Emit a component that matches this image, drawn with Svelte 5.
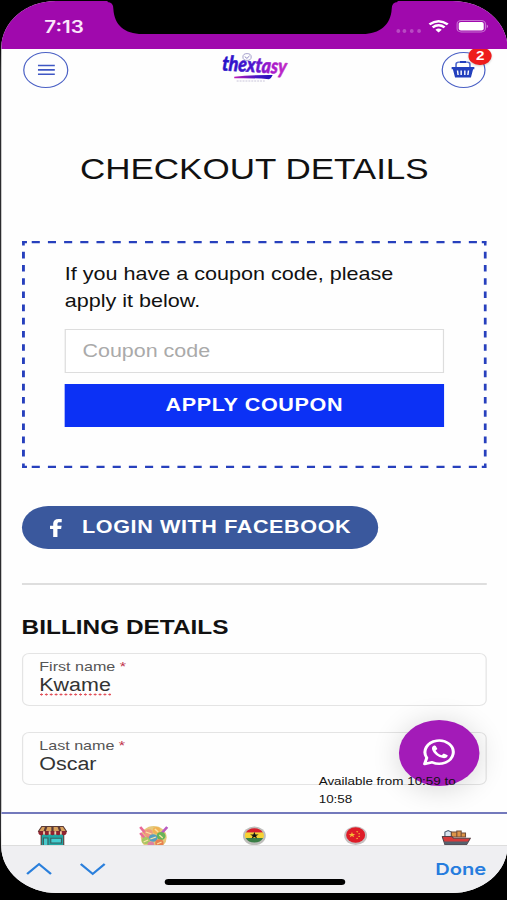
<script lang="ts">
  let coupon = $state("");
  let cartCount = $state(2);

  let fields = $state([
    { id: "first", label: "First name", value: "Kwame", misspelled: true },
    { id: "last", label: "Last name", value: "Oscar", misspelled: false },
  ]);
</script>

<div class="phone">
  <div class="screen">
    <div class="status">
      <span class="time">7:13</span>
      <svg class="notch" width="238" height="35" viewBox="0 0 290 35" preserveAspectRatio="none">
        <path d="M0 0H290V2Q284 2 284 9C283 25 272 34 255 34H35C17 34 7 25 6 9Q6 2 0 2Z" fill="#000" />
      </svg>
      <div class="signals">
        <span class="dots"><i></i><i></i><i></i><i></i></span>
        <svg width="17" height="13" viewBox="0 0 17 13">
          <path d="M1 4.4Q8.5-2 16 4.4" fill="none" stroke="#fff" stroke-width="2.3" />
          <path d="M3.6 7.3Q8.5 3.2 13.4 7.3" fill="none" stroke="#fff" stroke-width="2.3" />
          <path d="M5.9 9.7Q8.5 7.5 11.1 9.7L8.5 12.6Z" fill="#fff" />
        </svg>
        <svg width="27" height="13" viewBox="0 0 27 13">
          <rect x=".6" y=".6" width="23.3" height="11.3" rx="3.4" fill="none" stroke="#c873d4" stroke-width="1" />
          <rect x="2" y="2" width="20.5" height="8.5" rx="1.8" fill="#fff" />
          <path d="M25 4.4Q27 6.2 25 8.2Z" fill="#d58ae0" />
        </svg>
      </div>
    </div>

    <header>
      <button class="round menu" aria-label="Menu">
        <svg width="14" height="12" viewBox="0 0 14 12">
          <path d="M0 1.5H14M0 5.9H14M0 10.3H14" stroke="#3f57c4" stroke-width="1.6" />
        </svg>
      </button>
      <svg class="logo" width="58" height="32" viewBox="-2 0 58 32">
        <defs>
          <linearGradient id="ink" x1="0" x2="1">
            <stop offset="0" stop-color="#2611c8" />
            <stop offset=".45" stop-color="#4a16cf" />
            <stop offset=".75" stop-color="#a719cb" />
            <stop offset="1" stop-color="#c42bc6" />
          </linearGradient>
          <linearGradient id="swash" x1="0" x2="1">
            <stop offset="0" stop-color="#c01bb5" />
            <stop offset=".6" stop-color="#4315c5" />
            <stop offset="1" stop-color="#2311b8" />
          </linearGradient>
        </defs>
        <circle cx="20.5" cy="5" r="3.4" fill="none" stroke="#9b95c6" stroke-width=".8" />
        <path d="M18.6 4.6L20.4 6.4L22.6 3.8" fill="none" stroke="#8179bd" stroke-width=".8" />
        <text x="0" y="20.2" textLength="53" lengthAdjust="spacingAndGlyphs" fill="url(#ink)" stroke="url(#ink)" stroke-width=".5" transform="rotate(4 26 16)">thextasy</text>
        <path d="M10 24.8Q24 22.9 41.5 23.1Q40.5 26.4 38.5 27.2Q24 25.8 10 26.3Z" fill="url(#swash)" />
        <path d="M12 29H35" stroke="#b9b4cf" stroke-width=".7" stroke-dasharray="1.6 .8" />
      </svg>
      <button class="round cart" aria-label="Cart">
        <svg width="19" height="17" viewBox="0 0 19 17">
          <path d="M3.8 6.4V3.4Q3.8 1.2 6 1.2H13Q15.2 1.2 15.2 3.4V6.4" fill="none" stroke="#4f69cd" stroke-width="1.3" />
          <path d="M7 1H12" stroke="#2340bd" stroke-width="2" />
          <path d="M0 6H19V8.3H17.8L16 16.6H3L1.2 8.3H0Z" fill="#2340bd" />
          <path d="M5 9.5L5.5 14M8 9.5V14M11 9.5V14M14 9.5L13.5 14" stroke="#fff" stroke-width="1.2" />
        </svg>
        <span class="badge">{cartCount}</span>
      </button>
    </header>

    <main>
      <h1>CHECKOUT DETAILS</h1>

      <form class="coupon" onsubmit={(e) => e.preventDefault()}>
        <svg class="dashes" width="381" height="227">
          <g stroke="#2740bd">
            <path d="M8 1.1H374M8 225.9H374" stroke-width="2.2" stroke-dasharray="6.64 6.63" />
            <path d="M1.2 10.8V219M379.8 10.8V219" stroke-width="2.4" stroke-dasharray="6.6 6.6" />
            <path d="M0 1.1H4.1M1.2 0V4.4M376.9 1.1H381M379.8 0V4.4M0 225.9H4.1M1.2 222.6V227M376.9 225.9H381M379.8 222.6V227" stroke-width="2.2" />
          </g>
        </svg>
        <p>If you have a coupon code, please apply it below.</p>
        <input bind:value={coupon} placeholder="Coupon code" />
        <button class="apply">APPLY COUPON</button>
      </form>

      <button class="facebook">
        <svg width="10" height="18" viewBox="0 0 10 18">
          <path d="M2.6 18V9.9H0V6.8H2.6V4.6C2.6 1.7 4.2 0 7 0H9.6V3.2H7.8C6.5 3.2 6.1 3.8 6.1 5V6.8H9.5L9.1 9.9H6.1V18Z" fill="#fff" />
        </svg>
        <span>LOGIN WITH FACEBOOK</span>
      </button>

      <hr />

      <h2>BILLING DETAILS</h2>

      {#each fields as field (field.id)}
        <div class="field">
          <div class="label">{field.label} <span class="req">*</span></div>
          <div class="value"><span class:misspelled={field.misspelled}>{field.value}</span></div>
        </div>
      {/each}
    </main>

    <div class="chat">
      <div class="bubble">
        <svg width="28" height="28" viewBox="0 0 28 28">
          <path d="M2 26L3.8 19.8A11.6 11.6 0 1 1 8.3 24.3Z" fill="none" stroke="#fff" stroke-width="2.5" stroke-linejoin="round" />
          <path d="M9.9 7.6C8.5 8 7.7 9.8 8.2 11.6C9.3 15.9 13 19.3 17.2 20.1C19.2 20.4 20.9 19.2 21 17.2L17.7 15.4L16 17.3C13.8 16.4 12.2 15 11 12.6L12.5 11L11.2 7.9Q10.7 7.4 9.9 7.6Z" fill="#fff" />
        </svg>
      </div>
      <span class="hours">Available from 10:59 to 10:58</span>
    </div>

    <nav>
      <svg width="24" height="22" viewBox="0 0 26 22" preserveAspectRatio="none">
        <path d="M3 7H23V22H3Z" fill="#20a7a5" stroke="#5b3b37" />
        <path d="M11.5 12.2H21V17H11.5Z" fill="#43ced0" stroke="#395f61" />
        <path d="M5 12H9V22H5Z" fill="#49c9cb" stroke="#395f61" />
        <path d="M3.5 .6H22.5L25.5 5.4H.5Z" fill="#d9a05c" stroke="#5b3b37" />
        <path d="M7.5 .6L6 5.4M13 .6V5.4M18.5 .6L20 5.4" stroke="#5b3b37" stroke-width="2" />
        <path d="M.5 5.2H25.5V7.3A2.6 2.6 0 0 1 20.5 7.3A2.6 2.6 0 0 1 15.5 7.3A2.6 2.6 0 0 1 10.5 7.3A2.6 2.6 0 0 1 5.5 7.3A2.6 2.6 0 0 1 .5 7.3Z" fill="#8f2330" />
        <path d="M5.5 5.2V8.5M10.5 5.2V8.5M15.5 5.2V8.5M20.5 5.2V8.5" stroke="#f0cda9" stroke-width="1.6" />
      </svg>
      <svg width="24" height="22" viewBox="0 0 26 22" preserveAspectRatio="none">
        <circle cx="13" cy="11.5" r="11.5" fill="#e5c97c" />
        <path d="M1 1L10 13M1 7L8 16" stroke="#e96b9a" stroke-width="2.4" />
        <path d="M25 1L17 11" stroke="#b95bc1" stroke-width="2.4" />
        <circle cx="8.5" cy="7" r="3.7" fill="#ef9a7c" />
        <circle cx="15.5" cy="4.5" r="3.4" fill="#f0b254" />
        <circle cx="19.5" cy="10" r="4" fill="#67b559" />
        <circle cx="12.5" cy="12" r="3.8" fill="#579fc0" />
        <circle cx="6" cy="14.5" r="3.6" fill="#a7c764" />
        <circle cx="18" cy="17" r="3.7" fill="#e88151" />
        <circle cx="10.5" cy="18.5" r="3" fill="#de82a2" />
        <path d="M6 6L11 8M14 3L17 6M18 9L21 12M10 13L15 11M4 16L8 14M16 18L20 16" stroke="#fae3a4" stroke-width="1.2" />
      </svg>
      <svg width="19" height="22" viewBox="0 0 19 22">
        <circle cx="9.5" cy="9.8" r="9.4" fill="#bebebb" />
        <path d="M2.4 6.8A7.8 7.8 0 0 1 16.6 6.8Z" fill="#d71e2c" />
        <path d="M2.4 6.5H16.6Q18 9.5 16.6 12.3H2.4Q1 9.5 2.4 6.5Z" fill="#f6d333" />
        <path d="M2.4 12H16.6A7.8 7.8 0 0 1 2.4 12Z" fill="#397e45" />
        <path d="M9.5 6L10.4 8.4H13L10.9 9.9L11.7 12.4L9.5 10.9L7.3 12.4L8.1 9.9L6 8.4H8.6Z" fill="#151515" />
      </svg>
      <svg width="19" height="22" viewBox="0 0 19 22">
        <circle cx="9.5" cy="9.6" r="9.4" fill="#c6bfc0" />
        <circle cx="9.5" cy="9" r="7.8" fill="#de1c28" />
        <path d="M6.5 6L7.2 8H9.3L7.6 9.2L8.3 11.3L6.5 10L4.7 11.3L5.4 9.2L3.7 8H5.8Z" fill="#f6bd35" />
        <path d="M10.2 5.5L11.4 6M11.8 7.8H13M11.8 10.5L13 10.3M10.2 12.8L11.2 12.2" stroke="#f6bd35" stroke-width="1.1" />
      </svg>
      <svg width="24" height="22" viewBox="0 0 27 22" preserveAspectRatio="none">
        <path d="M3 11V6L6 4.5L9 6V11Z" fill="#d8e4ef" stroke="#4d5b70" />
        <path d="M9 6H14V11H9ZM14 5H18V11H14ZM18 7H22V11H18Z" fill="#dd9448" stroke="#714d38" />
        <path d="M.5 10.5H9.5L11 12.3H26.5L23 18.5H3Z" fill="#d63b3b" stroke="#574046" />
        <path d="M2 15.5H25L23 18.5H3Z" fill="#53616e" />
      </svg>
    </nav>

    <div class="keyboard-bar">
      <svg width="22" height="14" viewBox="0 0 22 14">
        <path d="M1.2 12L11 2L20.8 12" fill="none" stroke="#2a7fdc" stroke-width="1.9" />
      </svg>
      <svg width="22" height="14" viewBox="0 0 22 14">
        <path d="M1.2 2L11 12L20.8 2" fill="none" stroke="#2a7fdc" stroke-width="1.9" />
      </svg>
      <button class="done">Done</button>
      <span class="home"></span>
    </div>
  </div>
</div>

<style>
  :global(body) {
    background: #000;
    overflow: hidden;
  }
  /* wide display: everything is laid out at 415.6px and stretched sideways */
  .phone {
    width: 415.6px;
    height: 900px;
    box-sizing: border-box;
    padding: 1px 0 7px 1.3px;
    background: linear-gradient(#000 40px, #2b2b2e 70px, #2b2b2e 830px, #000 860px) 0 0 / 1px 100% no-repeat #000;
    transform: scaleX(1.22);
    transform-origin: 0 0;
    font-family: "Liberation Sans", Arial, sans-serif;
    color: #111;
  }
  .screen {
    position: relative;
    display: flex;
    flex-direction: column;
    height: 100%;
    overflow: hidden;
    background: #fefefe;
    border-radius: 45px 45px 46px 46px / 47px;
  }
  button {
    margin: 0;
    padding: 0;
    border: 0;
    background: none;
    font-family: inherit;
  }
  .status {
    position: relative;
    z-index: 2;
    flex: none;
    display: flex;
    justify-content: space-between;
    align-items: center;
    height: 48px;
    padding: 3px 15px 0 35px;
    box-sizing: border-box;
    background: #a009ad;
  }
  .time {
    color: #fbe6fb;
    font: 600 16.9px Inter, sans-serif;
  }
  .notch {
    position: absolute;
    top: -1px;
    left: 87px;
  }
  .signals {
    display: flex;
    align-items: center;
    gap: 6px;
  }
  .signals svg {
    display: block;
  }
  .dots {
    display: flex;
    gap: 2.6px;
    margin-top: 9px;
  }
  .dots i {
    width: 3px;
    height: 3.3px;
    border-radius: 50%;
    background: #b84ac3;
  }
  header {
    flex: none;
    display: flex;
    justify-content: space-between;
    padding: 3px 18px 0 18px;
    height: 40px;
  }
  .round {
    position: relative;
    display: grid;
    place-items: center;
    width: 37px;
    height: 35.5px;
    box-sizing: border-box;
    border: 1.4px solid #4b61c5;
    border-radius: 50%;
  }
  .cart {
    width: 36px;
  }
  .logo {
    overflow: visible;
  }
  .logo text {
    font: italic 900 21px Lato, sans-serif;
  }
  .badge {
    position: absolute;
    top: -6.5px;
    right: -6.5px;
    width: 19px;
    height: 18px;
    border-radius: 9px;
    background: #ee1c1c;
    color: #fff;
    font-size: 12.5px;
    font-weight: 700;
    line-height: 18px;
    text-align: center;
    box-shadow: 0 1px 2px rgba(0, 0, 0, 0.2);
  }
  main {
    flex: 1;
    min-height: 0;
    padding: 0 16.4px;
  }
  h1 {
    margin: 59.5px 0 54px;
    font-size: 28.7px;
    font-weight: 400;
    line-height: 35px;
    text-align: center;
  }
  .coupon {
    position: relative;
    height: 227px;
    box-sizing: border-box;
    padding: 20px 35.3px 0;
  }
  .dashes {
    position: absolute;
    top: 0;
    left: 0;
  }
  .coupon p {
    margin: 0 0 13px;
    font-size: 17.7px;
    line-height: 27.7px;
  }
  .coupon input {
    display: block;
    width: 100%;
    height: 44px;
    box-sizing: border-box;
    margin: 0 0 11px;
    padding: 1px 13.6px 0;
    border: 1.6px solid #ddd;
    border-radius: 0;
    background: #fff;
    font: 17.6px "Liberation Sans", Arial, sans-serif;
    outline: none;
  }
  .coupon input::placeholder {
    color: #aaa;
    opacity: 1;
  }
  .apply {
    display: block;
    width: 100%;
    height: 43px;
    background: #0c31f5;
    color: #fff;
    font-size: 17.7px;
    font-weight: 700;
    letter-spacing: 0.5px;
  }
  .facebook {
    display: flex;
    align-items: center;
    gap: 16.5px;
    width: 292px;
    height: 43px;
    margin-top: 38.5px;
    padding-left: 23px;
    border-radius: 22px;
    background: #3a589d;
    color: #fff;
    font-size: 17.7px;
    font-weight: 700;
    letter-spacing: 0.5px;
    white-space: nowrap;
  }
  hr {
    height: 2px;
    margin: 34px 0 29.5px;
    border: 0;
    background: #dedede;
  }
  h2 {
    margin: 0 0 13.5px;
    font-size: 20px;
    line-height: 25px;
  }
  .field {
    height: 53px;
    box-sizing: border-box;
    margin-bottom: 26px;
    padding: 3.5px 13.5px 0;
    border: 1.5px solid #e4e4e4;
    border-radius: 6px;
  }
  .label {
    color: #555;
    font-size: 13.2px;
    line-height: 17px;
  }
  .req {
    color: #c0334a;
  }
  .value {
    color: #333;
    font-size: 17.6px;
    line-height: 21px;
  }
  .misspelled {
    padding-bottom: 1px;
    background: radial-gradient(circle, #e2505a 0.8px, transparent 1.3px) 0 100% / 4px 3px repeat-x;
  }
  .chat {
    position: absolute;
    right: 22.4px;
    bottom: 84.5px;
    width: 132px;
    height: 89px;
  }
  .bubble {
    position: absolute;
    top: 0;
    right: 0;
    display: grid;
    place-items: center;
    width: 66px;
    height: 66px;
    border-radius: 50%;
    background: #a31bb8;
    box-shadow: 0 3px 26px rgba(0, 0, 0, 0.16);
  }
  .bubble svg {
    margin-top: -2px;
  }
  .hours {
    position: absolute;
    left: 0;
    bottom: 0.5px;
    width: 120px;
    font-size: 11px;
    line-height: 18px;
  }
  nav {
    position: relative;
    flex: none;
    display: grid;
    grid-template-columns: repeat(5, 1fr);
    justify-items: center;
    height: 33px;
    box-sizing: border-box;
    padding-top: 12px;
    overflow: hidden;
    border-top: 2px solid #7379bc;
    background: #fefefe;
  }
  .keyboard-bar {
    position: relative;
    flex: none;
    display: flex;
    align-items: flex-start;
    gap: 22px;
    height: 48.5px;
    box-sizing: border-box;
    padding: 16px 17px 0 19.5px;
    border-top: 1px solid #ddd;
    background: #efeff2;
  }
  .done {
    margin: -3.5px 0 0 auto;
    color: #267cde;
    font: 600 16.5px/22px Inter, sans-serif;
  }
  .home {
    position: absolute;
    bottom: 8.5px;
    left: 133.5px;
    width: 148px;
    height: 6px;
    border-radius: 3px;
    background: #000;
  }
</style>
